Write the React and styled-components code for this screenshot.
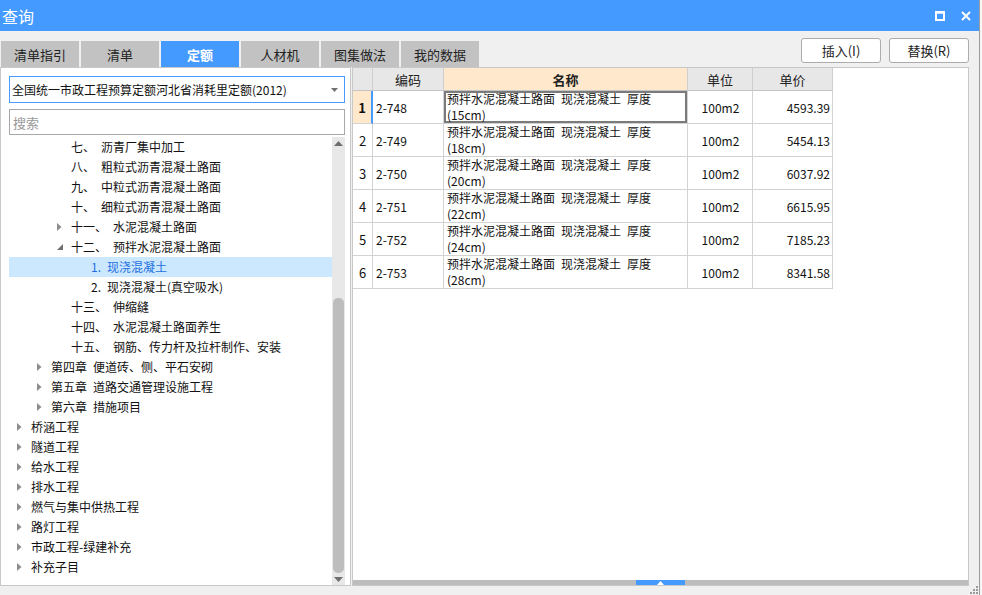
import React from 'react';
import styled, { createGlobalStyle } from 'styled-components';

const GlobalStyle = createGlobalStyle`
  html, body { margin: 0; padding: 0; width: 982px; height: 595px; overflow: hidden; background: #f0f0f0; }
  body { font-family: "Noto Sans CJK SC", "Noto Sans", sans-serif; font-size: 12px; color: #1c1c1c; }
  * { box-sizing: border-box; }
`;

const BLUE = '#459aff';

const Screen = styled.div`
  display: flex;
  width: 982px;
  height: 595px;
`;

const Window = styled.div`
  width: 979px;
  display: flex;
  flex-direction: column;
  background: #f0f0f0;
`;

const EdgeStrip = styled.div`
  flex: 1;
  border-left: 1px solid #9c9c9c;
  background: #f6f6f6;
`;

const TitleBar = styled.div`
  height: 31px;
  background: ${BLUE};
  display: flex;
  align-items: center;
  padding: 0 8px 0 2px;
  color: #fff;
`;

const Title = styled.div`
  font-size: 16px;
  line-height: 1;
`;

const WinButtons = styled.div`
  margin-left: auto;
  display: flex;
  align-items: center;
  gap: 16px;
`;

const TabBar = styled.div`
  height: 36px;
  display: flex;
  padding: 0 10px 0 1px;
`;

const Tabs = styled.div`
  display: flex;
  gap: 2px;
  align-self: flex-end;
`;

const Tab = styled.div`
  width: 78px;
  height: 26px;
  display: flex;
  align-items: center;
  justify-content: center;
  font-size: 13px;
  background: ${p => (p.$active ? BLUE : '#c2c2c2')};
  color: ${p => (p.$active ? '#fff' : '#222')};
  font-weight: ${p => (p.$active ? 700 : 400)};
`;

const Actions = styled.div`
  margin-left: auto;
  margin-top: 7px;
  display: flex;
  gap: 8px;
  align-self: flex-start;
`;

const ActionButton = styled.button`
  width: 80px;
  height: 25px;
  background: #fff;
  border: 1px solid #acacac;
  border-radius: 3px;
  font-family: inherit;
  font-size: 13px;
  color: #222;
  padding: 0;
`;

const Body = styled.div`
  height: 519px;
  display: flex;
  gap: 1px;
`;

const LeftPanel = styled.div`
  width: 351px;
  border: 1px solid #c8c8c8;
  background: #fff;
  padding: 8px 5px 0 8px;
  display: flex;
  flex-direction: column;
`;

const Select = styled.div`
  height: 27px;
  border: 1px solid #4a9bff;
  display: flex;
  align-items: center;
  padding: 0 6px 0 2px;
  font-size: 12px;
  color: #111;
`;

const SelectText = styled.span`
  flex: 1;
  white-space: nowrap;
  overflow: hidden;
`;

const Search = styled.input`
  height: 26px;
  margin-top: 6px;
  border: 1px solid #a8a8a8;
  padding: 0 3px;
  font-family: inherit;
  font-size: 13px;
  outline: none;
  &::placeholder { color: #9a9a9a; }
`;

const TreeArea = styled.div`
  flex: 1;
  min-height: 0;
  margin-top: 2px;
  display: flex;
`;

const TreeList = styled.div`
  flex: 1;
  overflow: hidden;
`;

const TreeRow = styled.div`
  height: 20px;
  display: flex;
  align-items: center;
  padding-left: ${p => 8 + p.$level * 20}px;
  padding-bottom: 1px;
  background: ${p => (p.$selected ? '#cce8ff' : 'transparent')};
  color: ${p => (p.$selected ? '#1f6fe0' : '#111')};
  white-space: nowrap;
`;

const ArrowSlot = styled.span`
  width: 14px;
  height: 18px;
  display: flex;
  align-items: center;
`;

const Num = styled.span`
  margin-right: 6px;
`;

const VScroll = styled.div`
  width: 13px;
  background: #e8e8e8;
  display: flex;
  flex-direction: column;
`;

const ScrollArrow = styled.div`
  height: 12px;
  display: flex;
  align-items: center;
  justify-content: center;
`;

const VTrack = styled.div`
  flex: 1;
  display: flex;
  flex-direction: column;
  justify-content: flex-end;
  padding: 0 1px;
`;

const VThumb = styled.div`
  height: 275px;
  background: #bdbdbd;
  border-radius: 5px;
`;

const RightPanel = styled.div`
  width: 617px;
  border: 1px solid #c8c8c8;
  background: #fff;
  display: flex;
  flex-direction: column;
`;

const Grid = styled.div`
  display: grid;
  grid-template-columns: 20px 71px 244px 65px 80px;
  grid-template-rows: 23px repeat(6, 33px);
  width: 480px;
`;

const HeadCell = styled.div`
  background: ${p => (p.$accent ? '#ffe8cb' : '#e7e7e7')};
  border-right: 1px solid #cfcfcf;
  border-bottom: 1px solid #c4c4c4;
  display: flex;
  align-items: center;
  justify-content: center;
  font-size: 13px;
  font-weight: ${p => (p.$accent ? 700 : 400)};
  color: #222;
`;

const Cell = styled.div`
  border-right: 1px solid #d3d3d3;
  border-bottom: 1px solid #d3d3d3;
  display: flex;
  align-items: center;
  justify-content: ${p => p.$justify || 'flex-start'};
  padding: 0 2px 0 3px;
  font-size: 12px;
  color: #111;
  white-space: nowrap;
`;

const RowNumCell = styled(Cell)`
  justify-content: center;
  padding: 0;
  background: ${p => (p.$active ? '#ffe8cb' : '#fff')};
  font-weight: ${p => (p.$active ? 700 : 400)};
  border-right: ${p => (p.$active ? `2px solid ${BLUE}` : '1px solid #d3d3d3')};
  font-size: 13px;
`;

const NameCell = styled(Cell)`
  flex-direction: column;
  align-items: flex-start;
  justify-content: flex-start;
  padding: 0 3px;
  white-space: nowrap;
  box-shadow: ${p => (p.$focus ? 'inset 0 0 0 2px #7b7b7b' : 'none')};
`;

const NameLine = styled.div`
  height: 16px;
  line-height: 16px;
  font-size: 12px;
`;

const Filler = styled.div`
  flex: 1;
`;

const HScroll = styled.div`
  height: 5px;
  background: #bdbdbd;
  display: flex;
  justify-content: center;
`;

const HThumb = styled.div`
  width: 49px;
  height: 5px;
  background: ${BLUE};
  display: flex;
  align-items: center;
  justify-content: center;
`;

const Footer = styled.div`
  flex: 1;
  display: flex;
  justify-content: flex-end;
  align-items: flex-end;
  padding: 0 1px 1px 0;
`;

const Collapsed = () => (
  <svg width="5" height="8" viewBox="0 0 5 8"><polygon points="0,0 4.5,4 0,8" fill="#8c8c8c" /></svg>
);
const Expanded = () => (
  <svg width="6" height="6" viewBox="0 0 6 6"><polygon points="6,0 6,6 0,6" fill="#6f6f6f" /></svg>
);

const tree = [
  { l: 2, n: '七、', t: '沥青厂集中加工' },
  { l: 2, n: '八、', t: '粗粒式沥青混凝土路面' },
  { l: 2, n: '九、', t: '中粒式沥青混凝土路面' },
  { l: 2, n: '十、', t: '细粒式沥青混凝土路面' },
  { l: 2, n: '十一、', t: '水泥混凝土路面', a: 'c' },
  { l: 2, n: '十二、', t: '预拌水泥混凝土路面', a: 'e' },
  { l: 3, n: '1.', t: '现浇混凝土', s: true },
  { l: 3, n: '2.', t: '现浇混凝土(真空吸水)' },
  { l: 2, n: '十三、', t: '伸缩缝' },
  { l: 2, n: '十四、', t: '水泥混凝土路面养生' },
  { l: 2, n: '十五、', t: '钢筋、传力杆及拉杆制作、安装' },
  { l: 1, n: '第四章', t: '便道砖、侧、平石安砌', a: 'c' },
  { l: 1, n: '第五章', t: '道路交通管理设施工程', a: 'c' },
  { l: 1, n: '第六章', t: '措施项目', a: 'c' },
  { l: 0, t: '桥涵工程', a: 'c' },
  { l: 0, t: '隧道工程', a: 'c' },
  { l: 0, t: '给水工程', a: 'c' },
  { l: 0, t: '排水工程', a: 'c' },
  { l: 0, t: '燃气与集中供热工程', a: 'c' },
  { l: 0, t: '路灯工程', a: 'c' },
  { l: 0, t: '市政工程-绿建补充', a: 'c' },
  { l: 0, t: '补充子目', a: 'c' },
];

const rows = [
  ['2-748', '15cm', '4593.39'],
  ['2-749', '18cm', '5454.13'],
  ['2-750', '20cm', '6037.92'],
  ['2-751', '22cm', '6615.95'],
  ['2-752', '24cm', '7185.23'],
  ['2-753', '28cm', '8341.58'],
];

const tabs = ['清单指引', '清单', '定额', '人材机', '图集做法', '我的数据'];

export default function App() {
  return (
    <Screen>
      <GlobalStyle />
      <Window>
        <TitleBar>
          <Title>查询</Title>
          <WinButtons>
            <svg width="10" height="10" viewBox="0 0 10 10">
              <rect x="1" y="1.5" width="8" height="7.5" fill="none" stroke="#fff" strokeWidth="2" />
              <rect x="0" y="0" width="10" height="2.5" fill="#fff" />
            </svg>
            <svg width="10" height="10" viewBox="0 0 10 10">
              <path d="M1 1 L9 9 M9 1 L1 9" stroke="#fff" strokeWidth="2" />
            </svg>
          </WinButtons>
        </TitleBar>
        <TabBar>
          <Tabs>
            {tabs.map(t => (
              <Tab key={t} $active={t === '定额'}>{t}</Tab>
            ))}
          </Tabs>
          <Actions>
            <ActionButton>插入(I)</ActionButton>
            <ActionButton>替换(R)</ActionButton>
          </Actions>
        </TabBar>
        <Body>
          <LeftPanel>
            <Select>
              <SelectText>全国统一市政工程预算定额河北省消耗里定额(2012)</SelectText>
              <svg width="7" height="4" viewBox="0 0 7 4"><polygon points="0,0 7,0 3.5,4" fill="#707070" /></svg>
            </Select>
            <Search placeholder="搜索" />
            <TreeArea>
              <TreeList>
                {tree.map((r, i) => (
                  <TreeRow key={i} $level={r.l} $selected={r.s}>
                    <ArrowSlot>{r.a === 'c' ? <Collapsed /> : r.a === 'e' ? <Expanded /> : null}</ArrowSlot>
                    {r.n && <Num>{r.n}</Num>}
                    <span>{r.t}</span>
                  </TreeRow>
                ))}
              </TreeList>
              <VScroll>
                <ScrollArrow>
                  <svg width="9" height="5" viewBox="0 0 9 5"><polygon points="0,5 9,5 4.5,0" fill="#6e6e6e" /></svg>
                </ScrollArrow>
                <VTrack><VThumb /></VTrack>
                <ScrollArrow>
                  <svg width="9" height="5" viewBox="0 0 9 5"><polygon points="0,0 9,0 4.5,5" fill="#6e6e6e" /></svg>
                </ScrollArrow>
              </VScroll>
            </TreeArea>
          </LeftPanel>
          <RightPanel>
            <Grid>
              <HeadCell />
              <HeadCell>编码</HeadCell>
              <HeadCell $accent>名称</HeadCell>
              <HeadCell>单位</HeadCell>
              <HeadCell>单价</HeadCell>
              {rows.map((r, i) => (
                <React.Fragment key={r[0]}>
                  <RowNumCell $active={i === 0}>{i + 1}</RowNumCell>
                  <Cell>{r[0]}</Cell>
                  <NameCell $focus={i === 0}>
                    <NameLine>预拌水泥混凝土路面&ensp;现浇混凝土&ensp;厚度</NameLine>
                    <NameLine>({r[1]})</NameLine>
                  </NameCell>
                  <Cell $justify="center">100m2</Cell>
                  <Cell $justify="flex-end">{r[2]}</Cell>
                </React.Fragment>
              ))}
            </Grid>
            <Filler />
            <HScroll>
              <HThumb>
                <svg width="7" height="4" viewBox="0 0 7 4"><polygon points="3.5,0 7,4 0,4" fill="#fff" /></svg>
              </HThumb>
            </HScroll>
          </RightPanel>
        </Body>
        <Footer>
          <svg width="8" height="8" viewBox="0 0 8 8" fill="#9a9a9a">
            <rect x="6" y="0" width="2" height="2" />
            <rect x="3" y="3" width="2" height="2" />
            <rect x="6" y="3" width="2" height="2" />
            <rect x="0" y="6" width="2" height="2" />
            <rect x="3" y="6" width="2" height="2" />
            <rect x="6" y="6" width="2" height="2" />
          </svg>
        </Footer>
      </Window>
      <EdgeStrip />
    </Screen>
  );
}
